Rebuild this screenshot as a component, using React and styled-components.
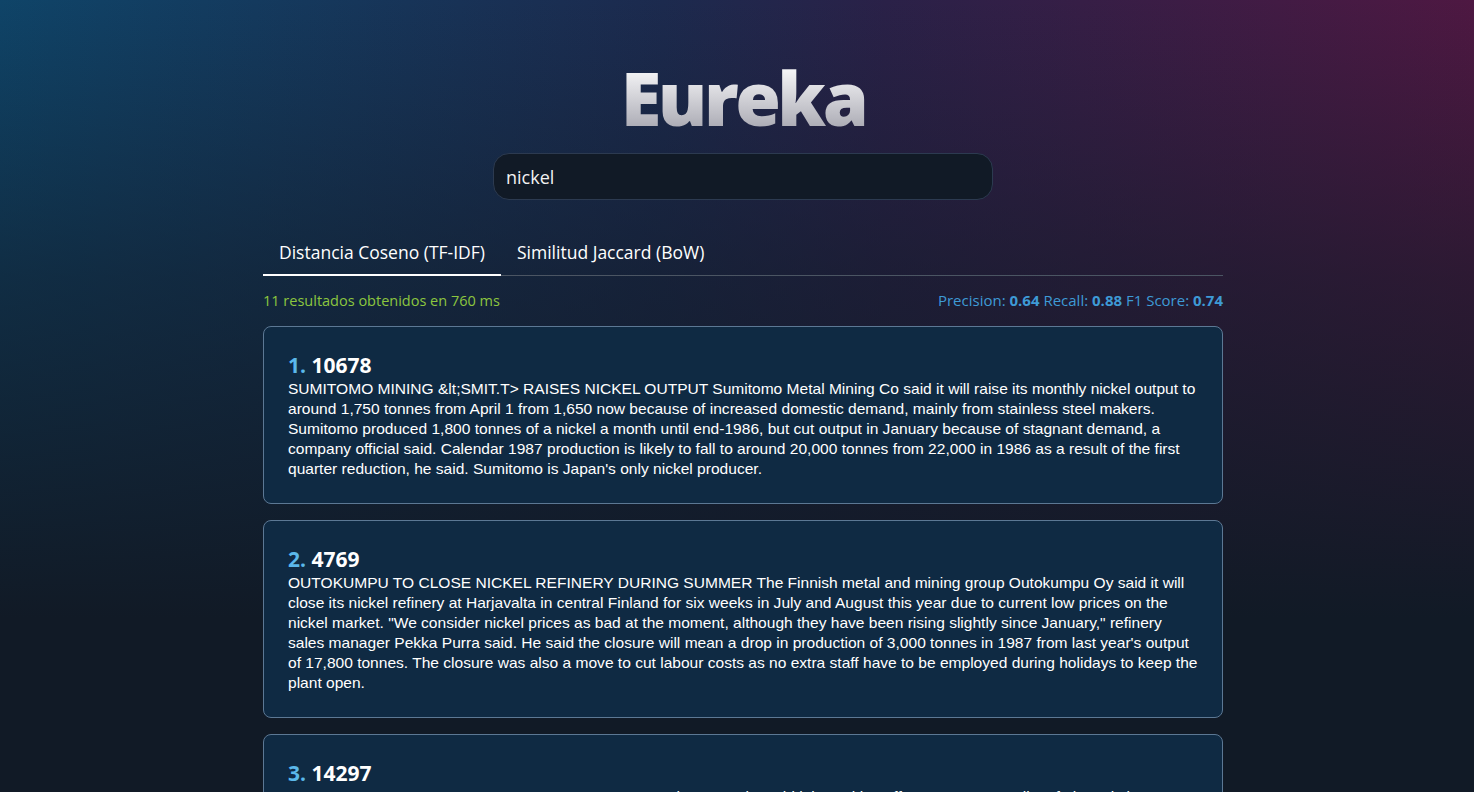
import React, { useState } from "react";
import styled, { createGlobalStyle } from "styled-components";

const GlobalStyle = createGlobalStyle`
  html, body {
    margin: 0;
    padding: 0;
    background: #111a26;
  }
  body {
    font-family: "Open Sans", "Liberation Sans", sans-serif;
    color: #ffffff;
  }
  * { box-sizing: border-box; }
`;

const results = [
  {
    id: "10678",
    text:
      "SUMITOMO MINING &lt;SMIT.T> RAISES NICKEL OUTPUT Sumitomo Metal Mining Co said it will raise its monthly nickel output to around 1,750 tonnes from April 1 from 1,650 now because of increased domestic demand, mainly from stainless steel makers. Sumitomo produced 1,800 tonnes of a nickel a month until end-1986, but cut output in January because of stagnant demand, a company official said. Calendar 1987 production is likely to fall to around 20,000 tonnes from 22,000 in 1986 as a result of the first quarter reduction, he said. Sumitomo is Japan's only nickel producer.",
  },
  {
    id: "4769",
    text:
      'OUTOKUMPU TO CLOSE NICKEL REFINERY DURING SUMMER The Finnish metal and mining group Outokumpu Oy said it will close its nickel refinery at Harjavalta in central Finland for six weeks in July and August this year due to current low prices on the nickel market. "We consider nickel prices as bad at the moment, although they have been rising slightly since January," refinery sales manager Pekka Purra said. He said the closure will mean a drop in production of 3,000 tonnes in 1987 from last year\'s output of 17,800 tonnes. The closure was also a move to cut labour costs as no extra staff have to be employed during holidays to keep the plant open.',
  },
  {
    id: "14297",
    text:
      "U.S. MINT SEEKING OFFERS ON COPPER, NICKEL The U.S. Mint said it is seeking offers on 7,500,000 lbs of electrolytic copper and 1,000,000 lbs of nickel for use in coin production. Offers are due by noon on the closing date.",
  },
];

const tabs = ["Distancia Coseno (TF-IDF)", "Similitud Jaccard (BoW)"];

export default function App() {
  const [active, setActive] = useState(0);
  const [query, setQuery] = useState("nickel");

  return (
    <Page>
      <GlobalStyle />
      <Container>
        <Title>Eureka</Title>
        <SearchInput value={query} onChange={(e) => setQuery(e.target.value)} />

        <Tabs>
          {tabs.map((t, i) => (
            <Tab key={t} $active={i === active} onClick={() => setActive(i)}>
              {t}
            </Tab>
          ))}
        </Tabs>

        <Stats>
          <Count>11 resultados obtenidos en 760 ms</Count>
          <Metrics>
            Precision: <b>0.64</b> Recall: <b>0.88</b> F1 Score: <b>0.74</b>
          </Metrics>
        </Stats>

        <List>
          {results.map((r, i) => (
            <Card key={r.id}>
              <CardTitle>
                <Rank>{i + 1}.</Rank> {r.id}
              </CardTitle>
              <CardText>{r.text}</CardText>
            </Card>
          ))}
        </List>
      </Container>
    </Page>
  );
}

const Page = styled.div`
  min-height: 100vh;
  background:
    linear-gradient(180deg, rgba(17, 26, 38, 0) 0%, rgba(17, 26, 38, 0.55) 35%, #111a26 78%),
    linear-gradient(90deg, #0f4468 0%, #1c2a4e 45%, #2a2148 60%, #4e1842 100%);
  background-attachment: fixed;
`;

const Container = styled.div`
  width: 960px;
  margin-left: calc(50% - 474px);
  padding-top: 52px;
  display: flex;
  flex-direction: column;
  align-items: center;
`;

const Title = styled.h1`
  margin: 0;
  font-family: "Open Sans", sans-serif;
  font-weight: 800;
  font-size: 74px;
  line-height: 92px;
  letter-spacing: -3.5px;
  background: linear-gradient(180deg, #f4f4f6 20%, #a3a3ad 90%);
  -webkit-background-clip: text;
  background-clip: text;
  color: transparent;
`;

const SearchInput = styled.input`
  margin-top: 9px;
  width: 500px;
  height: 47px;
  padding: 0 12px;
  border-radius: 16px;
  border: 1px solid #2c3a50;
  background: #111a26;
  color: #f2f2f2;
  font-family: "Open Sans", sans-serif;
  font-size: 18px;
  outline: none;
`;

const Tabs = styled.div`
  margin-top: 32px;
  width: 100%;
  display: flex;
  border-bottom: 1px solid #4b5563;
`;

const Tab = styled.button`
  background: none;
  border: none;
  border-bottom: 2px solid ${(p) => (p.$active ? "#ffffff" : "transparent")};
  margin-bottom: -1px;
  padding: 8px 16px 10px;
  color: #ffffff;
  font-family: "Open Sans", sans-serif;
  font-size: 17.5px;
  cursor: pointer;
`;

const Stats = styled.div`
  width: 100%;
  margin-top: 14px;
  display: flex;
  justify-content: space-between;
  align-items: center;
`;

const Count = styled.span`
  color: #8cc63f;
  font-size: 14.5px;
`;

const Metrics = styled.span`
  color: #3e9ad6;
  font-size: 15px;
  b { font-weight: 700; }
`;

const List = styled.div`
  width: 100%;
  margin-top: 16px;
  display: flex;
  flex-direction: column;
  gap: 16px;
`;

const Card = styled.div`
  padding: 24px;
  border: 1px solid #5c7894;
  border-radius: 8px;
  background: #0f2a43;
`;

const CardTitle = styled.h2`
  margin: 0;
  font-size: 21px;
  line-height: 28px;
  font-weight: 700;
  color: #ffffff;
`;

const Rank = styled.span`
  color: #5bb8ea;
`;

const CardText = styled.p`
  margin: 0;
  font-family: "Liberation Sans", Arial, sans-serif;
  font-size: 15.55px;
  line-height: 20px;
  color: #ffffff;
`;
